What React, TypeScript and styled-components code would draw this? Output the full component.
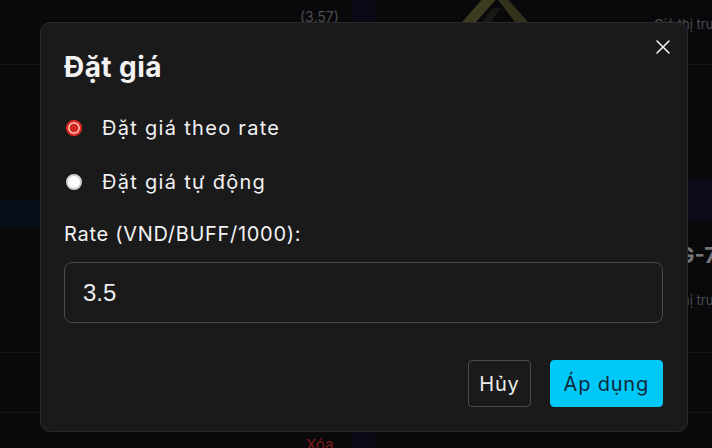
import React, { useEffect, useRef } from 'react';
import styled, { createGlobalStyle } from 'styled-components';

const GlobalStyle = createGlobalStyle`
  html, body {
    margin: 0;
    padding: 0;
    background: #111114;
    font-family: 'Inter', 'Noto Sans', sans-serif;
    overflow: hidden;
  }
  #root {
    width: 100vw;
    height: 100vh;
  }
  * {
    box-sizing: border-box;
  }
`;

// ---- page underneath the dialog ----

const Page = styled.div`
  width: 100%;
  height: 100%;
  display: grid;
  grid-template-columns: 33px 263px 56px 23px 275px 1fr;
  grid-template-rows: 65px 288px 60px 1fr;
  background: #111114;
`;

const Cell = styled.div<{ $line?: boolean; $tint?: string }>`
  border-bottom: ${(p) => (p.$line ? '1px solid #25252a' : 'none')};
  background: ${(p) => p.$tint || 'transparent'};
  display: flex;
  flex-direction: column;
  padding: 8px 4px;
  overflow: hidden;
  min-width: 0;
`;

const Muted = styled.span<{ $size?: number }>`
  color: #8a8a8e;
  font-size: ${(p) => p.$size || 14}px;
  white-space: nowrap;
`;

const ItemName = styled.span`
  color: #d8d8dc;
  font-size: 22px;
  font-weight: 700;
  white-space: nowrap;
  margin-top: 22px;
  margin-left: -12px;
`;

const Danger = styled.span`
  color: #e0302a;
  font-size: 15px;
  white-space: nowrap;
  margin-top: 14px;
  margin-left: 6px;
`;

const Band = styled.div<{ $color: string; $h: number; $top: number }>`
  height: ${(p) => p.$h}px;
  margin-top: ${(p) => p.$top}px;
  margin-left: -4px;
  margin-right: -4px;
  background: ${(p) => p.$color};
`;

const WeaponWrap = styled.div`
  padding-left: 62px;
  margin-top: -8px;
`;

// ---- dialog ----

const Backdrop = styled.div`
  position: fixed;
  inset: 0;
  background: rgba(0, 0, 0, 0.45);
  padding: 22px 24px 16px 40px;
  display: flex;
`;

const Dialog = styled.div`
  position: relative;
  flex: 1;
  background: #1a1a1b;
  border: 1px solid #2a2a2d;
  border-radius: 10px;
  padding: 27px 24px 24px 23px;
  display: flex;
  flex-direction: column;
  color: #f2f2f2;
`;

const Title = styled.h2`
  margin: 0;
  font-size: 28px;
  line-height: 34px;
  font-weight: 700;
  letter-spacing: 0.015em;
`;

const CloseButton = styled.button`
  position: absolute;
  top: 13px;
  right: 13px;
  width: 22px;
  height: 22px;
  padding: 0;
  border: none;
  background: transparent;
  color: #f0f0f0;
  display: flex;
  align-items: center;
  justify-content: center;
  cursor: pointer;
`;

const Options = styled.div`
  margin-top: 29px;
  display: flex;
  flex-direction: column;
  gap: 24px;
`;

const Option = styled.label`
  display: flex;
  align-items: center;
  gap: 20px;
  height: 30px;
  font-size: 20px;
  letter-spacing: 0.065em;
  cursor: pointer;
`;

const RadioDot = styled.span<{ $checked?: boolean }>`
  width: 16px;
  height: 16px;
  margin-left: 2px;
  border-radius: 50%;
  flex-shrink: 0;
  border: 2px solid ${(p) => (p.$checked ? '#ea2a1f' : '#d0d0d0')};
  background: ${(p) => (p.$checked ? '#d32a1f' : '#ffffff')};
  box-shadow: ${(p) => (p.$checked ? 'inset 0 0 0 1.5px #ffd9d6' : 'none')};
`;

const FieldLabel = styled.div`
  margin-top: 22px;
  height: 30px;
  line-height: 30px;
  font-size: 20px;
  letter-spacing: 0.035em;
`;

const RateInput = styled.input`
  margin-top: 13px;
  height: 61px;
  width: 100%;
  border: 1px solid #4a4a4f;
  border-radius: 8px;
  background: #1a1a1b;
  color: #ececec;
  caret-color: #ffffff;
  font-family: 'Liberation Sans', Arial, sans-serif;
  font-size: 24px;
  padding: 0 18px;
  outline: none;
`;

const Footer = styled.div`
  margin-top: auto;
  display: flex;
  justify-content: flex-end;
  gap: 19px;
`;

const Button = styled.button<{ $primary?: boolean }>`
  height: 47px;
  padding: 0 ${(p) => (p.$primary ? 13 : 10)}px;
  border-radius: 4px;
  border: 1px solid ${(p) => (p.$primary ? '#00c8f8' : '#4a4a4f')};
  background: ${(p) => (p.$primary ? '#00c8f8' : 'transparent')};
  color: ${(p) => (p.$primary ? '#10293a' : '#ececec')};
  font-family: 'Inter', 'Noto Sans', sans-serif;
  font-size: 20px;
  letter-spacing: 0.04em;
  cursor: pointer;
`;

function Weapon() {
  return (
    <svg width="110" height="30" viewBox="0 0 110 30">
      <path d="M14 30 L44 -4 L58 -4 L28 30 Z" fill="#6d6a3a" />
      <path d="M80 30 L54 -4 L64 -4 L94 30 Z" fill="#5d5b33" />
      <path d="M34 30 L52 8 L60 8 L44 30 Z" fill="#2a2a26" />
    </svg>
  );
}

function App() {
  const inputRef = useRef<HTMLInputElement>(null);

  useEffect(() => {
    const el = inputRef.current;
    if (el) {
      el.focus();
      el.setSelectionRange(3, 3);
    }
  }, []);

  return (
    <>
      <GlobalStyle />
      <Page>
        <Cell $line />
        <Cell $line />
        <Cell $line>
          <Muted>(3.57)</Muted>
        </Cell>
        <Cell $line $tint="#13132a" />
        <Cell $line>
          <WeaponWrap>
            <Weapon />
          </WeaponWrap>
        </Cell>
        <Cell $line>
          <Muted $size={13} style={{ marginTop: 8 }}>
            Giá thị trường
          </Muted>
        </Cell>

        <Cell $line>
          <Band $color="#0d1a2b" $h={27} $top={127} />
        </Cell>
        <Cell $line>
          <Band $color="#0d1a2b" $h={27} $top={127} />
        </Cell>
        <Cell $line />
        <Cell $line />
        <Cell $line />
        <Cell $line>
          <Band $color="#1a1433" $h={40} $top={107} />
          <ItemName>MAG-7</ItemName>
          <Muted $size={13} style={{ marginTop: 24 }}>
            Giá thị trường
          </Muted>
        </Cell>

        <Cell $line />
        <Cell $line />
        <Cell $line />
        <Cell $line />
        <Cell $line />
        <Cell $line />

        <Cell />
        <Cell />
        <Cell>
          <Danger>Xóa</Danger>
        </Cell>
        <Cell $tint="#13132a" />
        <Cell />
        <Cell />
      </Page>

      <Backdrop>
        <Dialog role="dialog" aria-labelledby="dlg-title">
          <CloseButton aria-label="Đóng">
            <svg width="16" height="16" viewBox="0 0 16 16">
              <path d="M2 2 L14 14 M14 2 L2 14" stroke="currentColor" strokeWidth="1.6" strokeLinecap="round" />
            </svg>
          </CloseButton>
          <Title id="dlg-title">Đặt giá</Title>
          <Options>
            <Option>
              <RadioDot $checked />
              Đặt giá theo rate
            </Option>
            <Option>
              <RadioDot />
              Đặt giá tự động
            </Option>
          </Options>
          <FieldLabel>Rate (VND/BUFF/1000):</FieldLabel>
          <RateInput ref={inputRef} defaultValue="3.5" />
          <Footer>
            <Button>Hủy</Button>
            <Button $primary>Áp dụng</Button>
          </Footer>
        </Dialog>
      </Backdrop>
    </>
  );
}

export default App;
